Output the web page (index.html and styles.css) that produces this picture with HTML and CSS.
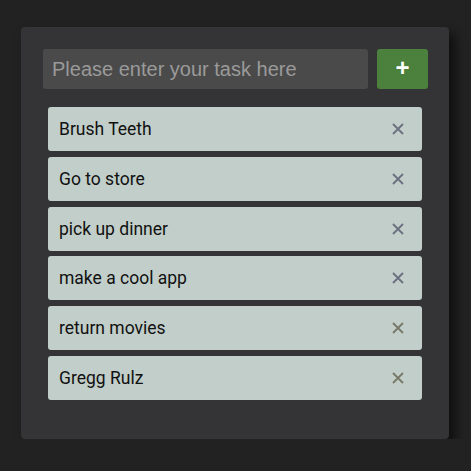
FILE: index.html
```html
<!DOCTYPE html>
<html>
<head>
<meta charset="utf-8">
<link rel="stylesheet" href="styles.css">
</head>
<body>
<div class="card">
  <div class="entry">
    <input class="task-input" type="text" placeholder="Please enter your task here">
    <button class="add-btn">+</button>
  </div>
  <ul class="tasks">
    <li class="task"><span>Brush Teeth</span><svg class="x" viewBox="0 0 12 12"><path d="M1 1L11 11M11 1L1 11"/></svg></li>
    <li class="task"><span>Go to store</span><svg class="x" viewBox="0 0 12 12"><path d="M1 1L11 11M11 1L1 11"/></svg></li>
    <li class="task"><span>pick up dinner</span><svg class="x" viewBox="0 0 12 12"><path d="M1 1L11 11M11 1L1 11"/></svg></li>
    <li class="task"><span>make a cool app</span><svg class="x" viewBox="0 0 12 12"><path d="M1 1L11 11M11 1L1 11"/></svg></li>
    <li class="task"><span>return movies</span><svg class="x alt" viewBox="0 0 12 12"><path d="M1 1L11 11M11 1L1 11"/></svg></li>
    <li class="task"><span>Gregg Rulz</span><svg class="x alt" viewBox="0 0 12 12"><path d="M1 1L11 11M11 1L1 11"/></svg></li>
  </ul>
</div>
</body>
</html>
```

FILE: styles.css
```css
html, body {
  margin: 0;
  background: #222222;
}
body {
  padding: 27px 0 0 21px;
  font-family: Roboto, "Liberation Sans", sans-serif;
}
.card {
  box-sizing: border-box;
  width: 428px;
  height: 412px;
  padding: 22px 21px 0 22px;
  background: #343436;
  border-radius: 4px;
  box-shadow: 6px 7px 12px rgba(0, 0, 0, 0.6);
}
.entry {
  display: flex;
  gap: 9px;
  height: 40px;
}
.task-input {
  box-sizing: border-box;
  width: 325px;
  height: 40px;
  border: none;
  border-radius: 3px;
  background: #4a4a4a;
  padding: 0 9px;
  font-family: "Liberation Sans", Arial, sans-serif;
  font-size: 20px;
  color: #ddd;
  outline: none;
}
.task-input::placeholder {
  color: #9a9a9a;
}
.add-btn {
  width: 51px;
  height: 40px;
  border: none;
  border-radius: 3px;
  background: #4b803d;
  color: #ffffff;
  font-family: "Liberation Sans", Arial, sans-serif;
  font-size: 24px;
  font-weight: bold;
  padding: 0 0 3px;
  line-height: 1;
}
.tasks {
  list-style: none;
  margin: 18px 6px 0 5px;
  padding: 0;
  display: flex;
  flex-direction: column;
  gap: 5.8px;
}
.task {
  box-sizing: border-box;
  height: 44px;
  display: flex;
  align-items: center;
  justify-content: space-between;
  padding: 0 18px 0 11px;
  background: #c2cec9;
  border-radius: 3px;
  color: #111111;
  font-size: 17.5px;
}
.x {
  width: 12px;
  height: 12px;
  stroke: #6a7080;
  stroke-width: 1.8;
  fill: none;
}
.x.alt {
  stroke: #787868;
}
```
